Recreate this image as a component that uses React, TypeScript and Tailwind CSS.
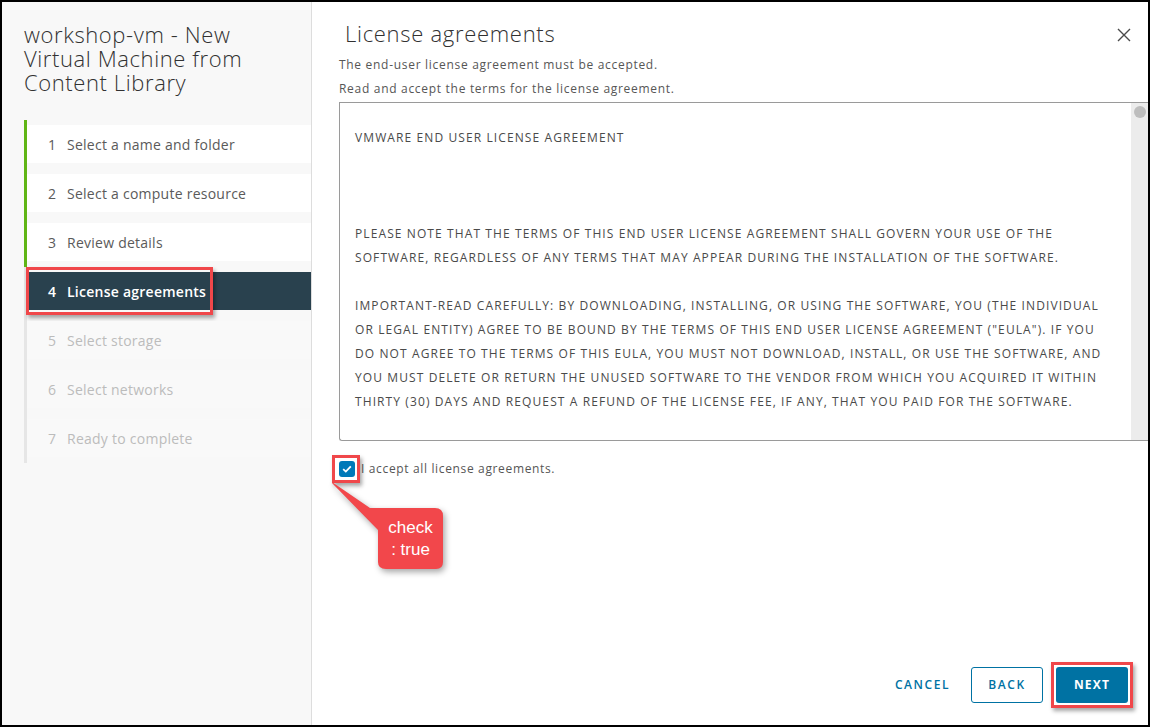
import React from 'react';

const steps = [
  { n: 1, label: 'Select a name and folder', state: 'done' },
  { n: 2, label: 'Select a compute resource', state: 'done' },
  { n: 3, label: 'Review details', state: 'done' },
  { n: 4, label: 'License agreements', state: 'current' },
  { n: 5, label: 'Select storage', state: 'todo' },
  { n: 6, label: 'Select networks', state: 'todo' },
  { n: 7, label: 'Ready to complete', state: 'todo' },
];

const eulaLines = [
  'VMWARE END USER LICENSE AGREEMENT',
  '',
  '',
  '',
  'PLEASE NOTE THAT THE TERMS OF THIS END USER LICENSE AGREEMENT SHALL GOVERN YOUR USE OF THE',
  'SOFTWARE, REGARDLESS OF ANY TERMS THAT MAY APPEAR DURING THE INSTALLATION OF THE SOFTWARE.',
  '',
  'IMPORTANT-READ CAREFULLY: BY DOWNLOADING, INSTALLING, OR USING THE SOFTWARE, YOU (THE INDIVIDUAL',
  'OR LEGAL ENTITY) AGREE TO BE BOUND BY THE TERMS OF THIS END USER LICENSE AGREEMENT ("EULA"). IF YOU',
  'DO NOT AGREE TO THE TERMS OF THIS EULA, YOU MUST NOT DOWNLOAD, INSTALL, OR USE THE SOFTWARE, AND',
  'YOU MUST DELETE OR RETURN THE UNUSED SOFTWARE TO THE VENDOR FROM WHICH YOU ACQUIRED IT WITHIN',
  'THIRTY (30) DAYS AND REQUEST A REFUND OF THE LICENSE FEE, IF ANY, THAT YOU PAID FOR THE SOFTWARE.',
];

function StepItem({ n, label, state }: { n: number; label: string; state: string }) {
  const bar = state === 'done' ? 'border-[#60b515]' : 'border-[#e6e6e6]';
  let row = 'bg-white text-[#5a5a5a]';
  if (state === 'current') row = 'bg-[#29414e] text-white font-semibold';
  if (state === 'todo') row = 'bg-[#f9f9f9] text-[#bcbcbc]';
  return (
    <div className={`border-l-[3px] ${bar} pt-[5px] pb-[6px]`}>
      <div className={`relative flex h-[38px] items-center pl-[21px] text-[14px] tracking-[0.25px] ${row}`}>
        <span className="w-[19px]">{n}</span>
        <span>{label}</span>
        {state === 'current' && (
          <div className="absolute left-[-1px] top-[-5px] h-[48px] w-[187px] border-[3px] border-[#f0474a] shadow-[2px_3px_4px_rgba(0,0,0,0.35)]" />
        )}
      </div>
    </div>
  );
}

export default function App() {
  return (
    <div
      className="flex h-[727px] w-[1150px] overflow-hidden border-2 border-black bg-white"
      style={{ fontFamily: '"Open Sans", "Liberation Sans", sans-serif' }}
    >
      <aside className="flex w-[310px] shrink-0 flex-col border-r border-[#dddddd] bg-[#f8f8f8] pl-[22px] pt-[20px]">
        <h1 className="text-[22px] leading-[24px] font-light tracking-[0.6px] text-[#313131]">
          workshop-vm - New
          <br />
          Virtual Machine from
          <br />
          Content Library
        </h1>
        <div className="mt-[26px]">
          {steps.map((s) => (
            <StepItem key={s.n} {...s} />
          ))}
        </div>
      </aside>

      <main className="relative flex flex-1 flex-col pl-[27px]">
        <div className="flex items-center justify-between pr-[16px] pt-[17px]">
          <h2 className="pl-[6px] text-[22px] leading-[28px] font-light tracking-[0.7px] text-[#313131]">License agreements</h2>
          <svg width="16" height="16" viewBox="0 0 16 16" className="mt-[4px]">
            <path d="M2 2 L14 14 M14 2 L2 14" stroke="#4a4a4a" strokeWidth="1.4" fill="none" />
          </svg>
        </div>
        <p className="mt-[6px] text-[12px] leading-[24px] tracking-[0.7px] text-[#565656]">The end-user license agreement must be accepted.</p>
        <p className="text-[12px] leading-[24px] tracking-[0.7px] text-[#565656]">Read and accept the terms for the license agreement.</p>

        <div className="mt-[1px] flex h-[339px] rounded-bl-[3px] border border-r-0 border-[#9a9a9a]">
          <div className="flex-1 pl-[15px] pt-[23px] text-[12px] leading-[24px] tracking-[1.1px] text-[#4a4a4a]">
            {eulaLines.map((l, i) => (
              <div key={i} className="h-[24px] whitespace-nowrap">
                {l}
              </div>
            ))}
          </div>
          <div className="flex w-[17px] justify-center bg-[#ececec] pt-[3px]">
            <div className="h-[12px] w-[12px] rounded-full bg-[#bdbdbd]" />
          </div>
        </div>

        <label className="relative mt-[19px] flex items-center gap-[6px] text-[12px] tracking-[0.65px] text-[#565656]">
          <span className="flex h-[16px] w-[16px] items-center justify-center rounded-[3px] bg-[#0079b8]">
            <svg width="10" height="8" viewBox="0 0 10 8">
              <path d="M1.2 4.2 L3.8 6.6 L8.8 1.4" stroke="white" strokeWidth="1.8" fill="none" />
            </svg>
          </span>
          I accept all license agreements.
          <div className="absolute left-[-7px] top-[-5px] h-[28px] w-[28px] border-[3px] border-[#f0474a] shadow-[2px_3px_4px_rgba(0,0,0,0.35)]" />
        </label>

        {/* callout annotation */}
        <div className="absolute left-[20px] top-[478px] h-[92px] w-[115px]">
          <svg width="115" height="92" viewBox="0 0 115 92" className="absolute left-0 top-0 drop-shadow-[2px_3px_3px_rgba(0,0,0,0.35)]">
            <path
              d="M17 0 L58 28 L123 28 Q131 28 131 36 L131 82 Q131 89 124 89 L74 89 Q66 89 66 82 L66 50 Z"
              transform="translate(-20 0)"
              fill="#f2474b"
            />
          </svg>
          <div className="absolute left-[46px] top-[37px] w-[65px] text-center text-[17px] leading-[22px] text-white" style={{ fontFamily: '"Liberation Sans", Arial, sans-serif' }}>
            check
            <br />: true
          </div>
        </div>

        <div className="mt-auto flex items-center justify-end gap-[13px] pb-[22px] pr-[20px]">
          <button className="h-[36px] px-[8px] text-[12px] font-semibold tracking-[0.13em] text-[#0072a3]">CANCEL</button>
          <button className="h-[36px] w-[72px] rounded-[3px] border border-[#0072a3] text-[12px] font-semibold tracking-[0.13em] text-[#0072a3]">BACK</button>
          <div className="relative">
            <button className="h-[36px] w-[72px] rounded-[3px] bg-[#0072a3] text-[12px] font-bold tracking-[0.1em] text-white">NEXT</button>
            <div className="absolute left-[-5px] top-[-5px] h-[46px] w-[82px] border-[3px] border-[#f0474a] shadow-[2px_3px_4px_rgba(0,0,0,0.35)]" />
          </div>
        </div>
      </main>
    </div>
  );
}
